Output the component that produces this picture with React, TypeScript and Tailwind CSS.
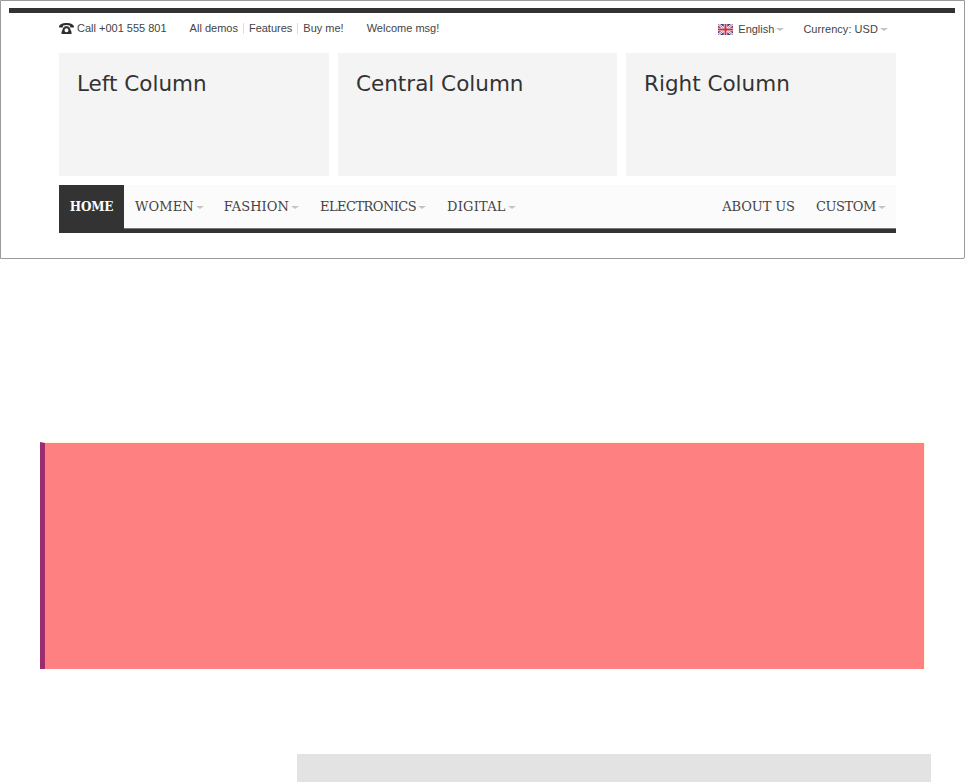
const sans = "font-['Liberation_Sans',Arial,sans-serif]";
const serif = "font-['DejaVu_Serif',serif]";

function Caret({ className = '' }: { className?: string }) {
  return (
    <span
      className={`ml-[2px] inline-block h-0 w-0 border-x-[4px] border-t-[3px] border-x-transparent border-t-[#c4c4c4] ${className}`}
    />
  );
}

function Phone() {
  return (
    <svg width="15" height="11" viewBox="0 0 15 11" fill="#2f2f2f">
      <path d="M0 3.600C.3 1.600 3.500 0 7.500 0s7.200 1.600 7.500 3.600c.1.700-.3 1-1 1h-2c-.6 0-.9-.3-.9-.9v-1c-1-.5-2.300-.7-3.600-.7s-2.600.2-3.600.7v1c0 .6-.3.9-.9.900H1c-.7 0-1.100-.3-1-1z" />
      <path d="M4.500 4.200h1V3.300h4v.9h1l2 4.800V11H2.500V9zM7.500 5.300a2 2 0 1 0 0 4 2 2 0 0 0 0-4z" fillRule="evenodd" />
    </svg>
  );
}

function Flag() {
  return (
    <svg width="15" height="11" viewBox="0 0 60 44">
      <rect width="60" height="44" fill="#2b3f86" />
      <path d="M0 0l60 44M60 0L0 44" stroke="#fff" strokeWidth="9" />
      <path d="M0 0l60 44M60 0L0 44" stroke="#c8304a" strokeWidth="3" />
      <path d="M30 0v44M0 22h60" stroke="#fff" strokeWidth="14" />
      <path d="M30 0v44M0 22h60" stroke="#c8304a" strokeWidth="8" />
    </svg>
  );
}

function Column({ title, className }: { title: string; className: string }) {
  return (
    <div className={`h-[123px] bg-[#f4f4f4] pl-[18px] pt-[16px] ${className}`}>
      <h3 className="font-['DejaVu_Sans',Verdana,sans-serif] text-[21.5px] leading-[30px] font-normal text-[#333]">
        {title}
      </h3>
    </div>
  );
}

function NavItem({ label, caret = true, className = '' }: { label: string; caret?: boolean; className?: string }) {
  return (
    <a className={`flex items-center whitespace-nowrap text-[13px] text-[#444] ${className}`}>
      {label}
      {caret && <Caret className="mt-[1px]" />}
    </a>
  );
}

export default function App() {
  return (
    <div className="h-[782px] overflow-hidden bg-white">
      {/* Header preview */}
      <div className="h-[259px] w-[965px] rounded-br-[2px] border border-[#9a9a9a] pl-[8px] pr-[8px] pt-[7px]">
        <div className="h-[5px] w-[946px] bg-[#333]" />

        <div className="ml-[50px] w-[837px]">
          {/* Top bar */}
          <div className={`flex h-[40px] items-start justify-between pt-[8px] text-[11px] leading-[14px] text-[#444] ${sans}`}>
            <div className="flex items-center">
              <Phone />
              <span className="ml-[3px]">Call +001 555 801</span>
              <span className="ml-[23px]">All demos</span>
              <span className="mx-[5px] h-[11px] w-px bg-[#ddd]" />
              <span>Features</span>
              <span className="mx-[5px] h-[11px] w-px bg-[#ddd]" />
              <span>Buy me!</span>
              <span className="ml-[23px]">Welcome msg!</span>
            </div>
            <div className="flex items-center pr-[8px] pt-[1px]">
              <Flag />
              <span className="ml-[5px]">English</span>
              <Caret />
              <span className="ml-[19px] tracking-[0.05px]">Currency: USD</span>
              <Caret />
            </div>
          </div>

          {/* Columns */}
          <div className="flex gap-[9px]">
            <Column title="Left Column" className="w-[270px]" />
            <Column title="Central Column" className="w-[279px]" />
            <Column title="Right Column" className="w-[270px]" />
          </div>

          {/* Nav */}
          <nav className={`mt-[9px] flex h-[48px] items-stretch border-b-[4px] border-[#333] bg-[#fbfbfb] shadow-[inset_0_-1px_0_#777] ${serif}`}>
            <a className="-mb-[4px] flex w-[65px] items-center justify-center bg-[#333] pb-[5px] text-[12px] font-bold tracking-[-0.2px] text-white">
              HOME
            </a>
            <NavItem label="WOMEN" className="ml-[11px] tracking-[0.1px]" />
            <NavItem label="FASHION" className="ml-[20px] tracking-[0.1px]" />
            <NavItem label="ELECTRONICS" className="ml-[21px] tracking-[-0.55px]" />
            <NavItem label="DIGITAL" className="ml-[21px] tracking-[0.2px]" />
            <div className="ml-auto flex pr-[10px]">
              <NavItem label="ABOUT US" caret={false} className="tracking-[-0.1px]" />
              <NavItem label="CUSTOM" className="ml-[21px] tracking-[-0.4px]" />
            </div>
          </nav>
        </div>
      </div>

      {/* Red banner */}
      <div className="ml-[40px] mt-[183px] h-[227px] w-[885px] border-r border-t border-[#fff8dc] border-l-[5px] border-l-[#9b2d6e] bg-[#ff8080]" />

      {/* Grey block */}
      <div className="ml-[297px] mt-[85px] h-[28px] w-[634px] bg-[#e3e3e3]" />
    </div>
  );
}
